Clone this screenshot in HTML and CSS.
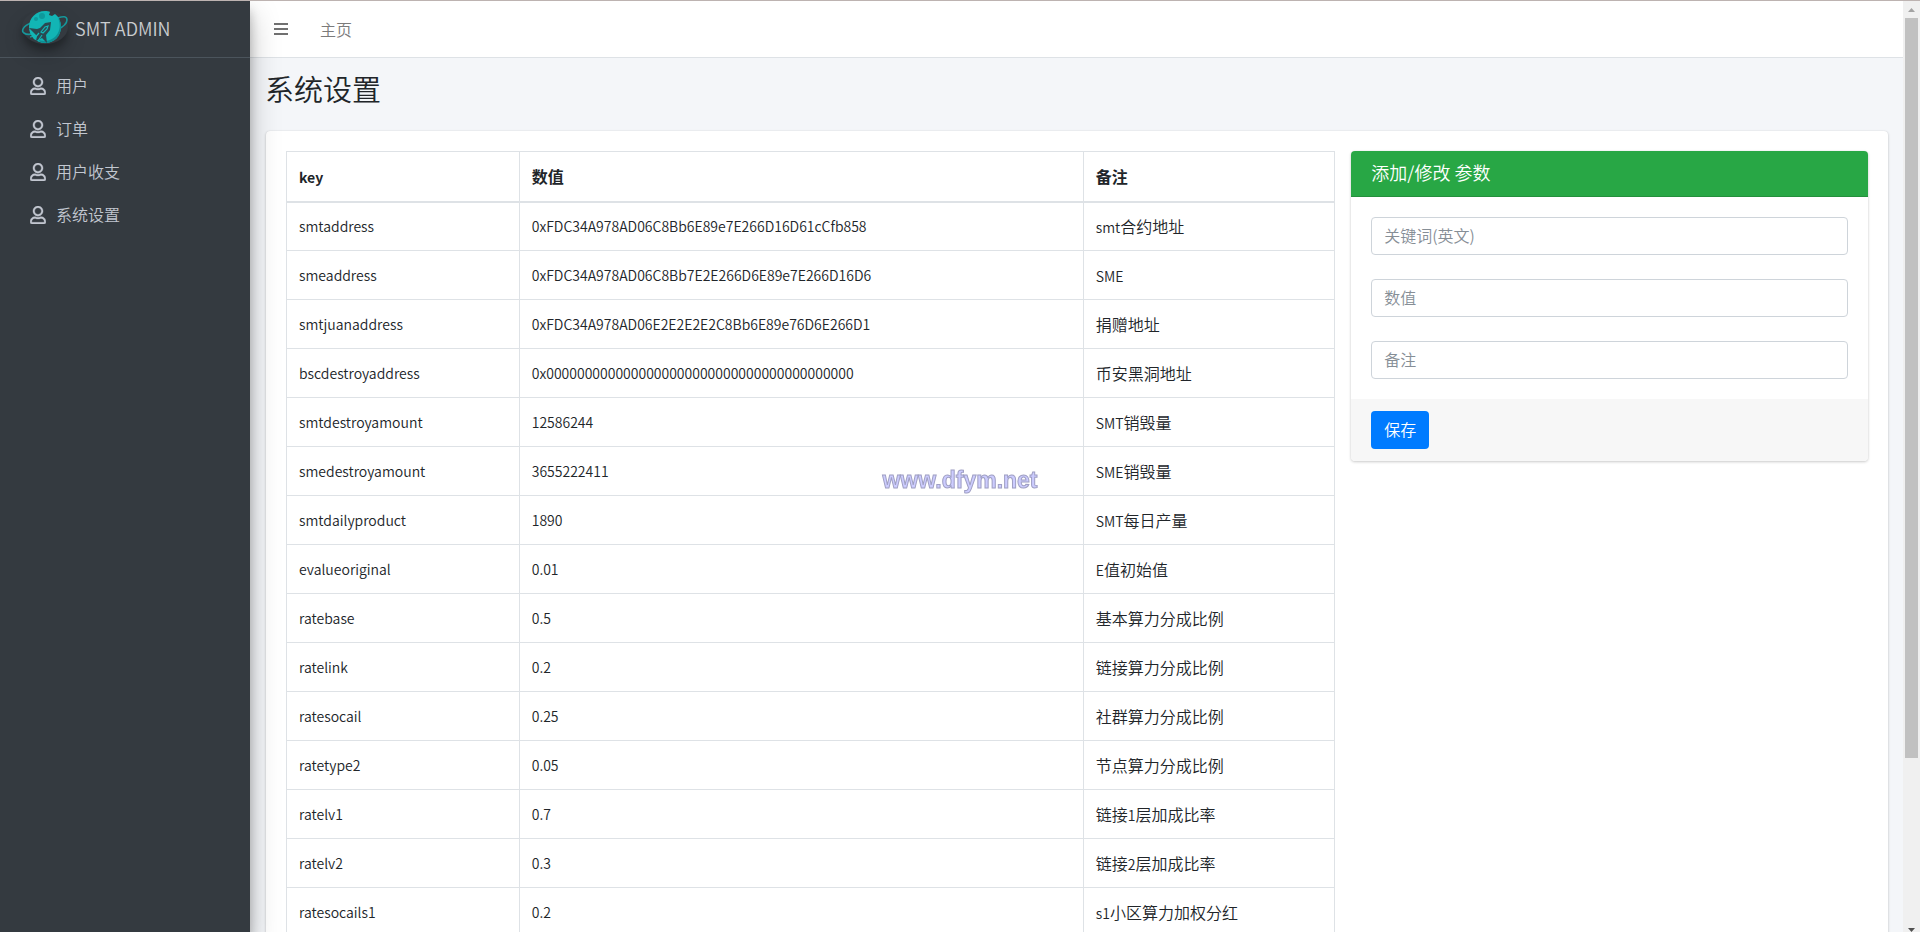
FILE: index.html
```html
<!DOCTYPE html>
<html lang="zh-CN">
<head>
    <meta charset="UTF-8">
    <meta name="viewport" content="width=device-width, initial-scale=1.0">
    <title>SMT ADMIN</title>
    <link rel="stylesheet" href="styles.css">
</head>
<body>
    <svg class="icon-defs" aria-hidden="true">
        <symbol id="icon-user" viewBox="0 0 448 512">
            <path d="M313.6 304c-28.7 0-42.5 16-89.6 16-47.1 0-60.8-16-89.6-16C60.2 304 0 364.2 0 438.4V464c0 26.5 21.5 48 48 48h352c26.5 0 48-21.5 48-48v-25.6c0-74.2-60.2-134.4-134.4-134.4zM400 464H48v-25.6c0-47.6 38.8-86.4 86.4-86.4 14.6 0 38.3 16 89.6 16 51.7 0 74.9-16 89.6-16 47.6 0 86.4 38.8 86.4 86.4V464zM224 288c79.5 0 144-64.5 144-144S303.5 0 224 0 80 64.5 80 144s64.5 144 144 144zm0-240c52.9 0 96 43.1 96 96s-43.1 96-96 96-96-43.1-96-96 43.1-96 96-96z"/>
        </symbol>
    </svg>

    <div class="wrapper">
        <aside class="sidebar">
            <a href="#" class="brand">
                <svg class="brand-logo" viewBox="0 0 46 34">
                    <path d="M9 13C1 16-1 21 2 23c4 3 10 1 16-2M36 8c5-2 9-2 9 2 0 4-4 7-10 10" fill="none" stroke="#16969a" stroke-width="1.6"/>
                    <path d="M23 1c2 0 4 0 5 1l-1 3 3 1 3-2c4 3 6 8 6 13 0 9-7 16-16 16S7 26 7 17 14 1 23 1z" fill="#12b5b5"/>
                    <path d="M36 8c5 11-1 22-13 23-4 0-7-1-10-3 9 10 26 4 26-11 0-4-1-7-3-9z" fill="#0d8f94"/>
                    <circle cx="20" cy="6" r="3" fill="#0e999c"/>
                    <circle cx="14" cy="9" r="2" fill="#0e999c"/>
                    <path d="M29 12l-1 8-4 5 1 8-5-5-6 3 1-5-8-8 8 1 3-1 5-5z" fill="#2b4850"/>
                    <path d="M26 16l-3 1-4 5 2 1 4-4z" fill="none" stroke="#12b5b5" stroke-width="1.2"/>
                    <path d="M17 23l-5 6M20 25l-4 6M8 27l6-1" fill="none" stroke="#12b5b5" stroke-width="1.2"/>
                </svg>
                <span class="brand-text">SMT ADMIN</span>
            </a>
            <nav class="menu">
                <a href="#"><svg class="icon"><use href="#icon-user"/></svg><span>用户</span></a>
                <a href="#"><svg class="icon"><use href="#icon-user"/></svg><span>订单</span></a>
                <a href="#"><svg class="icon"><use href="#icon-user"/></svg><span>用户收支</span></a>
                <a href="#"><svg class="icon"><use href="#icon-user"/></svg><span>系统设置</span></a>
            </nav>
        </aside>

        <div class="main">
            <header class="navbar">
                <button type="button" class="toggle" aria-label="菜单">
                    <svg viewBox="0 0 14 12"><path d="M0 1h14M0 6h14M0 11h14"/></svg>
                </button>
                <a href="#">主页</a>
            </header>

            <main class="content">
                <h1>系统设置</h1>
                <div class="card panel">
                    <div class="col-table">
                        <table class="params">
                            <thead>
                                <tr><th class="col-key"><span class="en">key</span></th><th class="col-value">数值</th><th>备注</th></tr>
                            </thead>
                            <tbody>
                                <tr><td class="en">smtaddress</td><td class="en">0xFDC34A978AD06C8Bb6E89e7E266D16D61cCfb858</td><td><span class="en">smt</span>合约地址</td></tr>
                                <tr><td class="en">smeaddress</td><td class="en">0xFDC34A978AD06C8Bb7E2E266D6E89e7E266D16D6</td><td><span class="en">SME</span></td></tr>
                                <tr><td class="en">smtjuanaddress</td><td class="en">0xFDC34A978AD06E2E2E2E2C8Bb6E89e76D6E266D1</td><td>捐赠地址</td></tr>
                                <tr><td class="en">bscdestroyaddress</td><td class="en">0x0000000000000000000000000000000000000000</td><td>币安黑洞地址</td></tr>
                                <tr><td class="en">smtdestroyamount</td><td class="en">12586244</td><td><span class="en">SMT</span>销毁量</td></tr>
                                <tr><td class="en">smedestroyamount</td><td class="en">3655222411</td><td><span class="en">SME</span>销毁量</td></tr>
                                <tr><td class="en">smtdailyproduct</td><td class="en">1890</td><td><span class="en">SMT</span>每日产量</td></tr>
                                <tr><td class="en">evalueoriginal</td><td class="en">0.01</td><td><span class="en">E</span>值初始值</td></tr>
                                <tr><td class="en">ratebase</td><td class="en">0.5</td><td>基本算力分成比例</td></tr>
                                <tr><td class="en">ratelink</td><td class="en">0.2</td><td>链接算力分成比例</td></tr>
                                <tr><td class="en">ratesocail</td><td class="en">0.25</td><td>社群算力分成比例</td></tr>
                                <tr><td class="en">ratetype2</td><td class="en">0.05</td><td>节点算力分成比例</td></tr>
                                <tr><td class="en">ratelv1</td><td class="en">0.7</td><td>链接<span class="en">1</span>层加成比率</td></tr>
                                <tr><td class="en">ratelv2</td><td class="en">0.3</td><td>链接<span class="en">2</span>层加成比率</td></tr>
                                <tr><td class="en">ratesocails1</td><td class="en">0.2</td><td><span class="en">s1</span>小区算力加权分红</td></tr>
                            </tbody>
                        </table>
                    </div>
                    <div class="col-form">
                        <form class="card">
                            <h3>添加/修改 参数</h3>
                            <div class="fields">
                                <input type="text" name="key" aria-label="关键词(英文)" placeholder="关键词(英文)">
                                <input type="text" name="value" aria-label="数值" placeholder="数值">
                                <input type="text" name="remark" aria-label="备注" placeholder="备注">
                            </div>
                            <div class="form-footer">
                                <button type="button" class="save">保存</button>
                            </div>
                        </form>
                    </div>
                </div>
            </main>
        </div>

        <div class="scrollbar" aria-hidden="true">
            <svg viewBox="0 0 17 17"><path d="M5 11h7L8.500 7z" fill="#a3a3a3"/></svg>
            <div class="track"><div class="thumb"></div></div>
            <svg viewBox="0 0 17 17"><path d="M5 13h7l-3.500 4z" fill="#505050"/></svg>
        </div>
    </div>
    <div class="watermark">www.dfym.net</div>
</body>
</html>
```
FILE: styles.css
```css
* {
    box-sizing: border-box;
}

body {
    margin: 0;
    font-family: "Noto Sans CJK SC", sans-serif;
    font-size: 16px;
    font-weight: 350;
    line-height: 24px;
    color: #212529;
    background: #f4f6f9;
}

a {
    text-decoration: none;
}

.icon-defs {
    display: none;
}

.en {
    font-size: 14px;
}

.wrapper {
    display: flex;
    height: 100vh;
    overflow: hidden;
    border-top: 1px solid #bdb3b1;
}

/* sidebar */
.sidebar {
    position: relative;
    z-index: 1;
    flex: 0 0 250px;
    background: #343a40;
    box-shadow: 0 14px 28px rgba(0, 0, 0, 0.25), 0 10px 10px rgba(0, 0, 0, 0.22);
}

.brand {
    display: flex;
    align-items: center;
    gap: 7px;
    height: 57px;
    padding: 0 22px 4px;
    border-bottom: 1px solid #4b545c;
    color: #c9cccf;
}

.brand-logo {
    width: 46px;
    height: 34px;
    border-radius: 50%;
    overflow: visible;
    box-shadow: 0 10px 20px rgba(0, 0, 0, 0.19), 0 6px 6px rgba(0, 0, 0, 0.23);
}

.brand-text {
    font-size: 18px;
    padding-top: 2px;
}

.menu {
    display: flex;
    flex-direction: column;
    gap: 3px;
    padding: 8px;
}

.menu a {
    display: flex;
    align-items: center;
    gap: 10px;
    height: 40px;
    padding: 0 22px;
    color: #c2c7d0;
}

.menu span {
    padding-bottom: 2px;
}

.icon {
    width: 16px;
    height: 18px;
    fill: currentColor;
    stroke: currentColor;
    stroke-width: 10px;
    overflow: visible;
}

/* content */
.main {
    flex: 1;
    min-width: 0;
}

.navbar {
    display: flex;
    align-items: center;
    gap: 32px;
    height: 57px;
    padding: 0 24px;
    background: #fff;
    border-bottom: 1px solid #dee2e6;
}

.navbar a {
    color: #7b7b7b;
}

.toggle {
    display: flex;
    padding: 0;
    border: 0;
    background: none;
}

.toggle svg {
    width: 14px;
    height: 12px;
    stroke: #707070;
    stroke-width: 2;
}

.content {
    padding: 13px 15px 0;
}

h1 {
    margin: 0 0 26px;
    font-size: 29px;
    font-weight: 350;
    line-height: 34px;
}

.card {
    background: #fff;
    border-radius: 4px;
    box-shadow: 0 0 1px rgba(0, 0, 0, 0.13), 0 1px 3px rgba(0, 0, 0, 0.2);
}

.panel {
    display: flex;
    align-items: flex-start;
    margin-left: 1px;
    padding: 20px 12px;
}

.col-table {
    width: calc(200% / 3);
    padding: 0 8px;
}

.col-form {
    width: calc(100% / 3);
    padding: 0 8px;
}

.params {
    width: 100%;
    table-layout: fixed;
    border-collapse: collapse;
}

.params th,
.params td {
    height: 49px;
    padding: 0 12px;
    border: 1px solid #dee2e6;
    text-align: left;
}

.params thead th {
    height: 50px;
    border-bottom-width: 2px;
}

.col-key {
    width: 22.2%;
}

.col-value {
    width: 53.8%;
}

h3 {
    margin: 0;
    padding: 9px 20px 12px;
    border-bottom: 1px solid #248f3c;
    border-radius: 4px 4px 0 0;
    background: #28a745;
    color: #fff;
    font-size: 18px;
    font-weight: 350;
    line-height: 24px;
}

.fields {
    display: flex;
    flex-direction: column;
    gap: 24px;
    padding: 20px;
}

.fields input {
    width: 100%;
    height: 38px;
    padding: 5px 12px 7px;
    border: 1px solid #ced4da;
    border-radius: 4px;
    font: inherit;
}

.fields input::placeholder {
    color: #868e96;
}

.form-footer {
    padding: 12px 20px;
    border-radius: 0 0 4px 4px;
    background: #f7f7f7;
}

.save {
    display: block;
    height: 38px;
    padding: 0 13px 2px;
    border: 0;
    border-radius: 4px;
    background: #007bff;
    color: #fff;
    font: inherit;
}

/* scrollbar */
.scrollbar {
    display: flex;
    flex-direction: column;
    flex: 0 0 17px;
    background: #f0f0f0;
}

.scrollbar svg {
    width: 17px;
    height: 17px;
}

.track {
    flex: 1;
    padding: 0 2px;
}

.thumb {
    height: 82.5%;
    background: #c1c1c1;
}

.watermark {
    position: fixed;
    z-index: 2;
    top: 50%;
    left: 0;
    right: 0;
    text-align: center;
    font: bold 23px/28px "Liberation Sans", sans-serif;
    color: #ccccff;
    -webkit-text-stroke: 1px #a0a0c4;
}
```
